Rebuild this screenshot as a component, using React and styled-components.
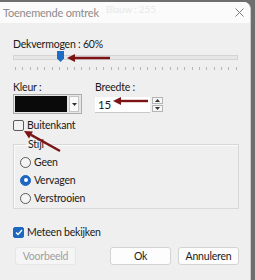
import React from "react";
import styled, { createGlobalStyle } from "styled-components";

const Global = createGlobalStyle`
  html, body { margin: 0; padding: 0; background: #6e6e6e; }
  #root { width: 255px; height: 280px; overflow: hidden; }
  * { box-sizing: border-box; }
`;

const Screen = styled.div`
  position: relative;
  width: 255px;
  height: 280px;
  background: #6e6e6e;
  padding: 2px 4px 0 0;
  font-family: Lato, "Noto Sans", sans-serif;
  font-size: 10.5px;
  letter-spacing: -0.2px;
  color: #1a1a1a;
`;

const Dialog = styled.div`
  width: 251px;
  height: 278px;
  background: #efefef;
  border-top-right-radius: 7px;
  border-right: 1px solid #c9c9c9;
  display: flex;
  flex-direction: column;
  overflow: hidden;
`;

const TitleBar = styled.div`
  height: 21px;
  flex: none;
  background: #fbfbfb;
  display: flex;
  align-items: center;
  justify-content: space-between;
  padding: 0 6px 0 3px;
  position: relative;
`;

const Title = styled.span`
  font-size: 11px;
  color: #8c8c8c;
`;

const Ghost = styled.span`
  position: absolute;
  left: 106px;
  top: 1px;
  font-size: 10px;
  color: #e8e8e8;
`;

const Body = styled.div`
  padding: 14px 11px 0 13px;
  display: flex;
  flex-direction: column;
`;

const Label = styled.div`
  line-height: ${(p) => p.$lh || 14}px;
  height: ${(p) => p.$lh || 14}px;
`;

const SliderWrap = styled.div`
  position: relative;
  height: 20px;
`;

const Track = styled.div`
  position: absolute;
  left: 0;
  right: 1px;
  top: 4px;
  height: 5px;
  background: #e6e6e6;
  border: 1px solid #d4d4d4;
`;

const Ticks = styled.div`
  position: absolute;
  left: 2px;
  right: 2px;
  top: 16px;
  height: 3px;
  display: flex;
  justify-content: space-between;
`;

const Tick = styled.span`
  width: 1px;
  height: 3px;
  background: #b5b5b5;
`;

const Thumb = styled.svg`
  position: absolute;
  left: 44px;
  top: 0;
`;

const Row = styled.div`
  display: flex;
  gap: 13px;
  margin-top: 10px;
`;

const Field = styled.div`
  display: flex;
  flex-direction: column;
`;

const ColorBox = styled.div`
  width: 69px;
  height: 20px;
  border: 1px solid #acacac;
  background: #e6e6e6;
  display: flex;
  align-items: center;
  padding: 1px;
  gap: 2px;
`;

const Swatch = styled.div`
  width: 52px;
  height: 16px;
  background: #0a0a0a;
`;

const DropBtn = styled.div`
  width: 10px;
  height: 16px;
  background: #fafafa;
  border: 1px solid #c4c4c4;
  display: flex;
  align-items: center;
  justify-content: center;
`;

const SpinRow = styled.div`
  display: flex;
  align-items: flex-start;
  gap: 2px;
  margin-top: 3px;
`;

const Input = styled.div`
  width: 55px;
  height: 16px;
  background: #fff;
  border-bottom: 1px solid #c8c8c8;
  padding-left: 3px;
  line-height: 15px;
  font-size: 11.5px;
`;

const Spin = styled.div`
  display: flex;
  flex-direction: column;
  gap: 1px;
`;

const SpinBtn = styled.div`
  width: 11px;
  height: 7px;
  background: #f6f6f6;
  border: 1px solid #b5b5b5;
  display: flex;
  align-items: center;
  justify-content: center;
`;

const Check = styled.div`
  display: flex;
  align-items: center;
  gap: 3px;
  margin-top: ${(p) => p.$mt || 0}px;
  line-height: 16px;
  height: 16px;
`;

const Box = styled.div`
  width: 11px;
  height: 11px;
  border-radius: 2px;
  border: 1px solid ${(p) => (p.$on ? "#1f66c1" : "#5a5a5a")};
  background: ${(p) => (p.$on ? "#1f66c1" : "#f3f3f3")};
  display: flex;
  align-items: center;
  justify-content: center;
`;

const Group = styled.fieldset`
  margin: 5px 0 0 0;
  padding: 3px 0 1px 6px;
  border: 1px solid #d8d8d8;
  box-shadow: inset 1px 1px 0 #fbfbfb;
  display: flex;
  flex-direction: column;
  min-width: 0;
`;

const Legend = styled.legend`
  padding: 0 2px;
  margin-left: 6px;
  line-height: 12px;
`;

const Radio = styled.div`
  display: flex;
  align-items: center;
  gap: 3px;
  height: 18px;
`;

const Dot = styled.div`
  width: 11px;
  height: 11px;
  border-radius: 50%;
  border: 1px solid ${(p) => (p.$on ? "#1f66c1" : "#5a5a5a")};
  background: ${(p) => (p.$on ? "#1f66c1" : "#f5f5f5")};
  display: flex;
  align-items: center;
  justify-content: center;
  &::after {
    content: "";
    display: ${(p) => (p.$on ? "block" : "none")};
    width: 4px;
    height: 4px;
    border-radius: 50%;
    background: #fff;
  }
`;

const Buttons = styled.div`
  display: flex;
  margin-top: 7px;
`;

const Button = styled.div`
  width: 61px;
  height: 18px;
  border: 1px solid ${(p) => (p.$disabled ? "#e6e6e6" : "#d3d3d3")};
  border-radius: 3px;
  background: ${(p) => (p.$disabled ? "#f5f5f5" : "#fdfdfd")};
  color: ${(p) => (p.$disabled ? "#9e9e9e" : "#1a1a1a")};
  display: flex;
  align-items: center;
  justify-content: center;
  margin-left: ${(p) => p.$ml || 0}px;
  margin-right: ${(p) => (p.$push ? "auto" : "0")};
`;

const Overlay = styled.svg`
  position: absolute;
  left: 0;
  top: 0;
  pointer-events: none;
`;

const Arrow = ({ x1, y1, x2, y2 }) => {
  const a = Math.atan2(y2 - y1, x2 - x1);
  const L = 8, W = 4;
  const bx = x2 - L * Math.cos(a), by = y2 - L * Math.sin(a);
  const px = -Math.sin(a) * W, py = Math.cos(a) * W;
  return (
    <g>
      <line x1={x1} y1={y1} x2={bx} y2={by} stroke="#7c1414" strokeWidth="2.4" />
      <polygon
        points={`${x2},${y2} ${bx + px},${by + py} ${bx - px},${by - py}`}
        fill="#7c1414"
      />
    </g>
  );
};

const Tri = ({ up }) => (
  <svg width="5" height="3" viewBox="0 0 5 3">
    <polygon points={up ? "0,3 5,3 2.5,0" : "0,0 5,0 2.5,3"} fill="#333" />
  </svg>
);

export default function App() {
  return (
    <>
      <Global />
      <Screen>
        <Dialog>
          <TitleBar>
            <Ghost>Blauw : 255</Ghost>
            <Title>Toenemende omtrek</Title>
            <svg width="9" height="9" viewBox="0 0 9 9">
              <path d="M0.5 0.5 L8.5 8.5 M8.5 0.5 L0.5 8.5" stroke="#7a7a7a" strokeWidth="1" />
            </svg>
          </TitleBar>
          <Body>
            <Label>Dekvermogen : 60%</Label>
            <SliderWrap>
              <Track />
              <Ticks>
                {Array.from({ length: 31 }).map((_, i) => (
                  <Tick key={i} />
                ))}
              </Ticks>
              <Thumb width="7" height="11" viewBox="0 0 7 11">
                <path d="M0 0 H7 V7.5 L3.5 11 L0 7.5 Z" fill="#1f6cc4" />
              </Thumb>
            </SliderWrap>
            <Row>
              <Field>
                <Label $lh={13}>Kleur :</Label>
                <ColorBox>
                  <Swatch />
                  <DropBtn>
                    <Tri />
                  </DropBtn>
                </ColorBox>
              </Field>
              <Field>
                <Label $lh={13}>Breedte :</Label>
                <SpinRow>
                  <Input>15</Input>
                  <Spin>
                    <SpinBtn>
                      <Tri up />
                    </SpinBtn>
                    <SpinBtn>
                      <Tri />
                    </SpinBtn>
                  </Spin>
                </SpinRow>
              </Field>
            </Row>
            <Check $mt={3}>
              <Box />
              <span>Buitenkant</span>
            </Check>
            <Group>
              <Legend>Stijl</Legend>
              <Radio>
                <Dot />
                <span>Geen</span>
              </Radio>
              <Radio>
                <Dot $on />
                <span>Vervagen</span>
              </Radio>
              <Radio>
                <Dot />
                <span>Verstrooien</span>
              </Radio>
            </Group>
            <Check $mt={15}>
              <Box $on>
                <svg width="8" height="7" viewBox="0 0 8 7">
                  <path d="M1 3.5 L3 5.5 L7 1" stroke="#fff" strokeWidth="1.3" fill="none" />
                </svg>
              </Box>
              <span>Meteen bekijken</span>
            </Check>
            <Buttons>
              <Button $disabled $ml={2} $push>
                Voorbeeld
              </Button>
              <Button>Ok</Button>
              <Button $ml={7}>Annuleren</Button>
            </Buttons>
          </Body>
        </Dialog>
        <Overlay width="255" height="280">
          <Arrow x1={110} y1={58} x2={67} y2={58} />
          <Arrow x1={148} y1={101} x2={113} y2={101} />
          <Arrow x1={60} y1={151} x2={24} y2={131} />
        </Overlay>
      </Screen>
    </>
  );
}
